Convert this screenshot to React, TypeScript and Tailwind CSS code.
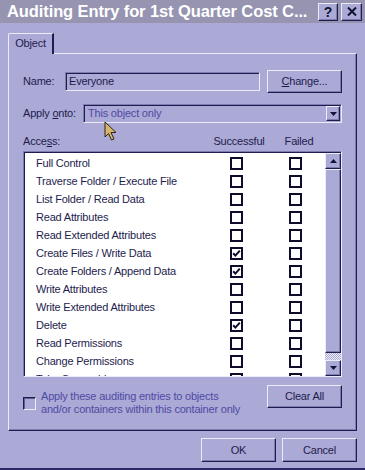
import React from "react";

const rows: [string, boolean, boolean][] = [
  ["Full Control", false, false],
  ["Traverse Folder / Execute File", false, false],
  ["List Folder / Read Data", false, false],
  ["Read Attributes", false, false],
  ["Read Extended Attributes", false, false],
  ["Create Files / Write Data", true, false],
  ["Create Folders / Append Data", true, false],
  ["Write Attributes", false, false],
  ["Write Extended Attributes", false, false],
  ["Delete", true, false],
  ["Read Permissions", false, false],
  ["Change Permissions", false, false],
  ["Take Ownership", false, false],
];

function Raised({ children, className }: { children?: React.ReactNode; className: string }) {
  return (
    <div
      className={
        "flex items-center justify-center bg-[#ABA9D5] border border-t-[#ECEBF8] border-l-[#ECEBF8] border-r-[#1E1C50] border-b-[#1E1C50] shadow-[inset_-1px_-1px_0_#7E7CAE] " +
        className
      }
    >
      {children}
    </div>
  );
}

function Check({ checked }: { checked: boolean }) {
  return (
    <div className="w-[13px] h-[13px] border-2 border-[#0E0C2C] bg-white flex items-center justify-center">
      {checked && (
        <svg width="9" height="9" viewBox="0 0 9 9">
          <polyline points="1.2,4.2 3.4,6.6 7.8,1.6" fill="none" stroke="#0E0C2C" strokeWidth="2" />
        </svg>
      )}
    </div>
  );
}

function Tri({ up }: { up: boolean }) {
  return (
    <svg width="7" height="4" viewBox="0 0 7 4">
      {up ? <polygon points="0,4 7,4 3.5,0" fill="#15133A" /> : <polygon points="0,0 7,0 3.5,4" fill="#15133A" />}
    </svg>
  );
}

export default function App() {
  return (
    <div className="relative w-[365px] h-[470px] overflow-hidden bg-[#ABA9D5] text-[#1E1C4E] text-[11px] tracking-[-0.2px] font-['Liberation_Sans',Arial,sans-serif] flex flex-col">
      {/* Title bar */}
      <div className="h-[23px] shrink-0 bg-[#9694B0] flex items-center pl-[7px] pr-[3px]">
        <span className="flex-1 text-white font-bold text-[16.5px] leading-none tracking-[-0.1px] whitespace-nowrap">
          Auditing Entry for 1st Quarter Cost C...
        </span>
        <Raised className="w-[20px] h-[18px] shrink-0">
          <span className="text-[14px] font-bold leading-none text-[#111030] tracking-normal">?</span>
        </Raised>
        <Raised className="w-[21px] h-[18px] ml-[3px] shrink-0">
          <svg width="10" height="9" viewBox="0 0 10 9">
            <path d="M1 0.5 L9 8.5 M9 0.5 L1 8.5" stroke="#111030" strokeWidth="2" />
          </svg>
        </Raised>
      </div>

      {/* Tab */}
      <div className="mt-[10px] pl-[8px] flex">
        <div className="relative z-10 mb-[-1px] w-[46px] h-[21px] bg-[#ABA9D5] border-t border-l border-t-[#ECEBF8] border-l-[#ECEBF8] border-r-2 border-r-[#1E1C50] rounded-tl-[2px] flex items-center justify-center pb-[1px]">
          <span>Object</span>
        </div>
      </div>

      {/* Panel */}
      <div className="mx-[8px] h-[378px] shrink-0 border border-t-[#ECEBF8] border-l-[#ECEBF8] border-r-[#1E1C50] border-b-[#1E1C50] shadow-[inset_-1px_-1px_0_#7E7CAE] px-[14px] pt-[16px] flex flex-col">
        {/* Name */}
        <div className="h-[23px] flex items-center">
          <span className="w-[42px]">Name:</span>
          <div className="w-[195px] h-[19px] border border-t-[#7E7CAE] border-l-[#7E7CAE] border-r-[#ECEBF8] border-b-[#ECEBF8] shadow-[inset_1px_1px_0_#1E1C50] flex items-center pl-[3px]">
            Everyone
          </div>
          <Raised className="w-[75px] h-[23px] ml-[7px]">
            <span>
              <span className="underline">C</span>hange...
            </span>
          </Raised>
        </div>

        {/* Apply onto */}
        <div className="mt-[11px] h-[19px] flex items-center">
          <span className="w-[60px] whitespace-nowrap">
            Apply <span className="underline">o</span>nto:
          </span>
          <div className="w-[259px] h-[19px] border border-t-[#7E7CAE] border-l-[#7E7CAE] border-r-[#ECEBF8] border-b-[#ECEBF8] shadow-[inset_1px_1px_0_#1E1C50] flex items-center pl-[4px] pr-[1px]">
            <span className="flex-1 text-[#4E4BA4]">This object only</span>
            <Raised className="w-[14px] h-[15px]">
              <Tri up={false} />
            </Raised>
          </div>
        </div>

        {/* Access header */}
        <div className="mt-[11px] h-[14px] flex items-center">
          <span className="w-[186px]">
            Acce<span className="underline">s</span>s:
          </span>
          <span className="w-[60px] text-center">Successful</span>
          <span className="w-[60px] text-center">Failed</span>
        </div>

        {/* List */}
        <div className="mt-[3px] w-[319px] h-[226px] border border-t-[#7E7CAE] border-l-[#7E7CAE] border-r-[#ECEBF8] border-b-[#ECEBF8] flex">
          <div className="flex-1 flex border-t border-l border-[#1E1C50] border-r-0 border-b-0 min-w-0">
            <div className="flex-1 bg-white overflow-hidden pt-[1px]">
              {rows.map(([label, s, f]) => (
                <div key={label} className="h-[18px] flex items-center">
                  <span className="w-[184px] pl-[11px] whitespace-nowrap">{label}</span>
                  <div className="w-[60px] flex justify-center">
                    <Check checked={s} />
                  </div>
                  <div className="w-[60px] flex justify-center">
                    <Check checked={f} />
                  </div>
                </div>
              ))}
            </div>
            <div className="w-[16px] shrink-0 flex flex-col">
              <Raised className="h-[16px] shrink-0">
                <Tri up={true} />
              </Raised>
              <Raised className="h-[184px] shrink-0" />
              <div className="flex-1 bg-[repeating-conic-gradient(#ECEBF8_0_25%,#ABA9D5_0_50%)] bg-[length:2px_2px]" />
              <Raised className="h-[16px] shrink-0">
                <Tri up={false} />
              </Raised>
            </div>
          </div>
        </div>

        {/* Bottom row */}
        <div className="mt-[8px] flex items-start">
          <div className="flex-1 flex items-center mt-[5px]">
            <div className="w-[13px] h-[13px] border border-t-[#1E1C50] border-l-[#1E1C50] border-r-[#ECEBF8] border-b-[#ECEBF8] shadow-[inset_1px_1px_0_#5E5C90]" />
            <div className="ml-[5px] leading-[13px] text-[#4E4BA4]">
              <div>Apply these auditing entries to objects</div>
              <div>and/or containers within this container only</div>
            </div>
          </div>
          <Raised className="w-[75px] h-[23px]">
            <span>Clear All</span>
          </Raised>
        </div>
      </div>

      {/* OK / Cancel */}
      <div className="mt-[7px] flex justify-end pr-[8px] gap-[6px]">
        <Raised className="w-[75px] h-[24px]">OK</Raised>
        <Raised className="w-[75px] h-[24px]">Cancel</Raised>
      </div>

      <div className="mt-auto h-[2px] bg-[#2A2866]" />

      {/* Mouse cursor */}
      <svg className="absolute left-[104px] top-[121px]" width="14" height="21" viewBox="0 0 14 21">
        <path d="M1 1 L1 16 L4.5 12.5 L7.5 19 L10 18 L7 11.5 L12 11.5 Z" fill="#D8B76C" stroke="#2E2410" strokeWidth="1" />
      </svg>
    </div>
  );
}
